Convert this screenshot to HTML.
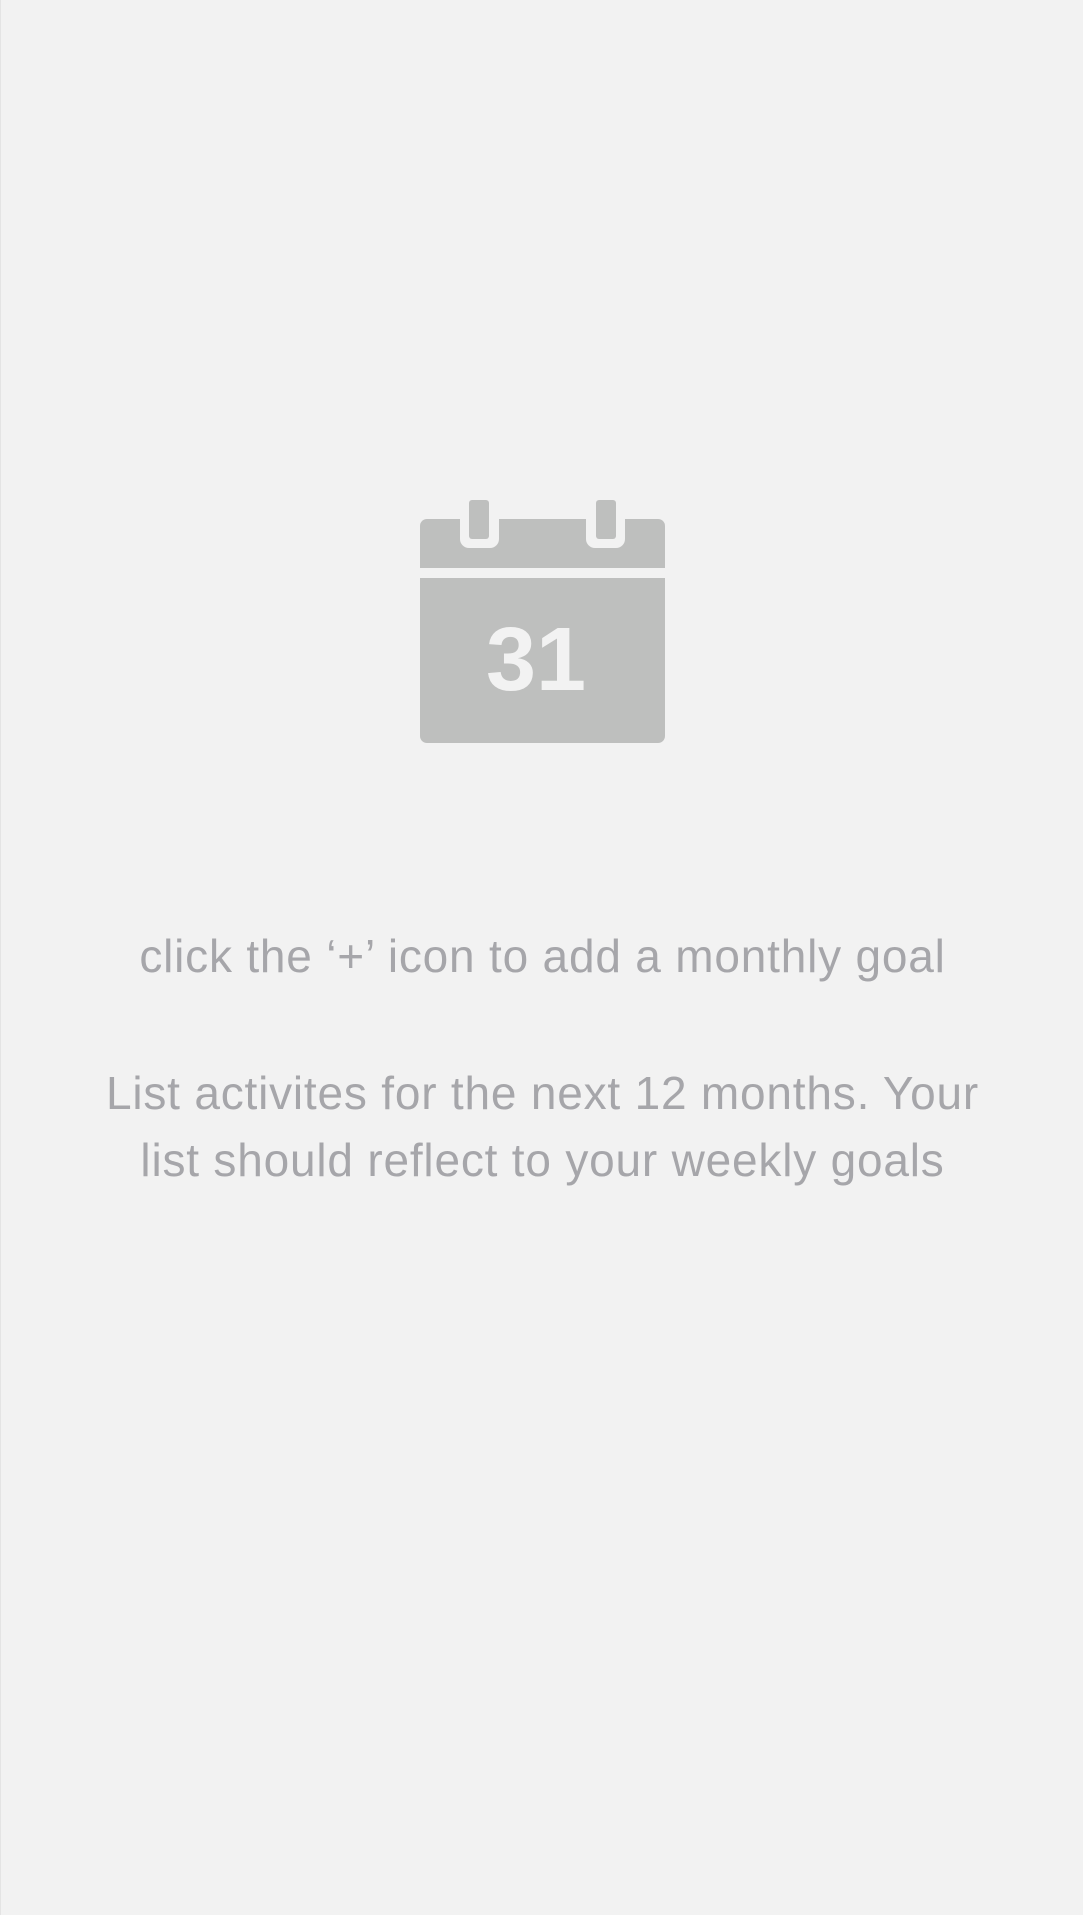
<!DOCTYPE html>
<html><head><meta charset="utf-8"><style>
html,body{margin:0;padding:0;}
body{width:1083px;height:1915px;background:#f2f2f2;position:relative;overflow:hidden;font-family:"Liberation Sans",Arial,sans-serif;border-left:1px solid #e4e4e4;box-sizing:border-box;}
.t{position:absolute;left:0;width:1083px;text-align:center;color:#a6a6aa;font-size:46px;letter-spacing:0.8px;white-space:nowrap;line-height:1;}
</style></head><body>
<svg style="position:absolute;left:0;top:0" width="1083" height="800">
<rect x="419" y="519" width="245" height="224" rx="7" fill="#bebfbe"/>
<rect x="419" y="568" width="245" height="10" fill="#f2f2f2"/>
<rect x="459" y="505" width="39" height="43" rx="9" fill="#f2f2f2"/>
<rect x="585" y="505" width="39" height="43" rx="9" fill="#f2f2f2"/>
<rect x="459" y="505" width="39" height="14" fill="#f2f2f2"/>
<rect x="585" y="505" width="39" height="14" fill="#f2f2f2"/>
<rect x="468" y="500" width="20" height="39" rx="3" fill="#bebfbe"/>
<rect x="595" y="500" width="20" height="39" rx="3" fill="#bebfbe"/>
<text x="535" y="690" text-anchor="middle" font-family="Liberation Sans, Arial, sans-serif" font-weight="bold" font-size="90" fill="#f2f2f2">31</text>
</svg>
<div class="t" style="top:933px">click the ‘+’ icon to add a monthly goal</div>
<div class="t" style="top:1070px">List activites for the next 12 months. Your</div>
<div class="t" style="top:1137px">list should reflect to your weekly goals</div>
</body></html>
